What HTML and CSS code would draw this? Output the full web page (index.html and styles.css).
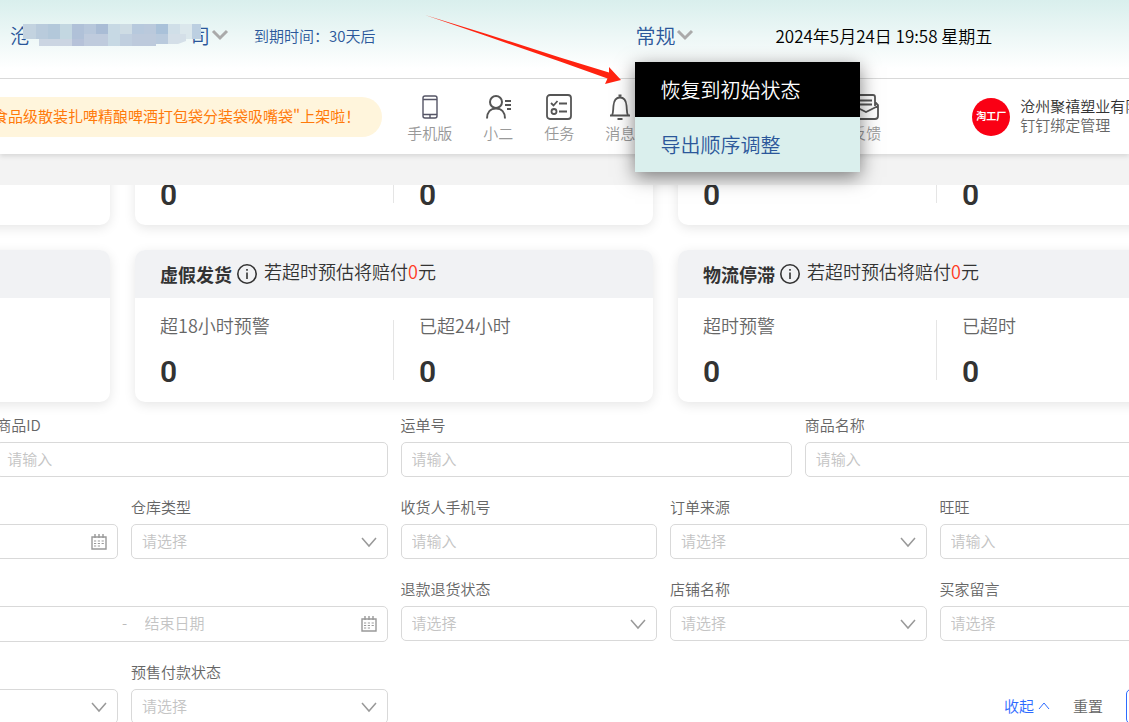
FILE: index.html
```html
<!DOCTYPE html>
<html lang="zh-CN">
<head>
    <meta charset="UTF-8">
    <meta name="viewport" content="width=device-width, initial-scale=1.0">
    <title>订单管理</title>
    <link rel="stylesheet" href="styles.css">
</head>
<body>

<!-- 图标 -->
<svg class="sprite" aria-hidden="true">
    <symbol id="icon-down" viewBox="0 0 16 16"><path d="M1 4l7 8 7-8" fill="none" stroke="#999" stroke-width="1.5"/></symbol>
    <symbol id="icon-bold-down" viewBox="0 0 16 12"><path d="M1 2l7 7 7-7" fill="none" stroke="#aaa" stroke-width="3"/></symbol>
    <symbol id="icon-info" viewBox="0 0 20 20">
        <circle cx="10" cy="10" r="9.2" fill="none" stroke="#333" stroke-width="1.6"/>
        <path d="M10 8.5v6.5M10 5v1.8" stroke="#333" stroke-width="1.6"/>
    </symbol>
    <symbol id="icon-calendar" viewBox="0 0 16 16">
        <path d="M1 3h14v12H1zM4 0v4M8 0v4M12 0v4" fill="none" stroke="#999" stroke-width="1.4"/>
        <path d="M3 7h10M3 9.5h10M3 12h7" stroke="#999" stroke-width="1.2" stroke-dasharray="2.2 1.6"/>
    </symbol>
</svg>

<div class="top">
    <!-- 页面头部 -->
    <header class="header">
        <button class="company" type="button">
            <span>沧</span>
            <svg class="mosaic" width="178" height="24" viewBox="0 0 178 24" aria-hidden="true">
                <path fill="#c3d3e0" d="M0 1h13v15H0z"/>
                <path fill="#b9cbdc" d="M13 1h12v15H13z"/>
                <path fill="#b3c8da" d="M25 1h12v15H25z"/>
                <path fill="#c3d7e1" d="M37 1h12v15H37z"/>
                <path fill="#b0c1d8" d="M49 1h12v15H49z"/>
                <path fill="#b7c7db" d="M61 1h12v15H61z"/>
                <path fill="#a9bcd5" d="M73 1h12v10H73z"/>
                <path fill="#c7d9e4" d="M85 1h12v22H85z"/>
                <path fill="#cedce4" d="M97 1h12v10H97z"/>
                <path fill="#b7c9dd" d="M109 1h12v10h-12z"/>
                <path fill="#bac9dc" d="M121 1h12v10h-12z"/>
                <path fill="#a9c1d9" d="M133 1h12v10h-12z"/>
                <path fill="#d0dfe8" d="M145 1h12v10h-12z"/>
                <path fill="#dbe7ec" d="M157 1h12v15h-12z"/>
                <path fill="#bccfe1" d="M169 1h9v15h-9z"/>
                <path fill="#cbd5e2" d="M16 16h33v7H16z"/>
                <path fill="#b6c2d9" d="M49 16h12v7H49z"/>
                <path fill="#bfcbdd" d="M61 11h24v12H61z"/>
                <path fill="#c0cfdf" d="M97 11h12v12H97z"/>
                <path fill="#bdcadc" d="M109 11h24v12h-24z"/>
                <path fill="#b9cadd" d="M133 11h12v10h-12z"/>
                <path fill="#d4dfe8" d="M145 11h18v7l-8 3h-10z"/>
            </svg>
            <span>司</span>
            <svg width="18" height="12" aria-hidden="true"><use href="#icon-bold-down"/></svg>
        </button>
        <span class="expire">到期时间：30天后</span>
        <div class="mode">
            <button class="mode-toggle" type="button">常规<svg width="18" height="12" aria-hidden="true"><use href="#icon-bold-down"/></svg></button>
            <div class="mode-menu">
                <button class="mode-item active" type="button">恢复到初始状态</button>
                <button class="mode-item" type="button">导出顺序调整</button>
            </div>
        </div>
        <time class="now" datetime="2024-05-24T19:58">2024年5月24日 19:58 星期五</time>
        <svg class="arrow" width="200" height="72" viewBox="0 0 200 72" aria-hidden="true">
            <path d="M0 0L60 18.500 135 42.500 184 57.500 184 52 196 65 180 69 182.500 63.500 135 46.500 60 20.500z" fill="#ff2310"/>
        </svg>
    </header>

    <!-- 工具栏 -->
    <nav class="toolbar">
        <a class="notice" href="#">食品级散装扎啤精酿啤酒打包袋分装袋吸嘴袋"上架啦！</a>
        <a class="tool" href="#">
            <svg width="26" height="26" viewBox="0 0 26 26" fill="none" stroke="#556" stroke-width="1.4">
                <rect x="6" y="2" width="14" height="22" rx="2"/>
                <path d="M6 5.5h14M6 20.5h14M13 20.5v3.500"/>
            </svg>
            手机版
        </a>
        <a class="tool" href="#">
            <svg width="26" height="26" viewBox="0 0 26 26" fill="none" stroke="#555" stroke-width="2">
                <circle cx="11" cy="8" r="6"/>
                <path d="M2 24.500c0-6 3.500-10 9-10s9 4 9 10M20 7h6M20 11h6M22 15h4"/>
            </svg>
            小二
        </a>
        <a class="tool" href="#">
            <svg width="26" height="26" viewBox="0 0 26 26" fill="none" stroke="#555" stroke-width="1.800">
                <rect x="1" y="1" width="24" height="24" rx="3"/>
                <path d="M5 9l2.500 2.500 4-4.500M13 9.500h8M13 17.500h8"/>
                <circle cx="8" cy="17.500" r="2.500"/>
            </svg>
            任务
        </a>
        <a class="tool" href="#">
            <svg width="26" height="26" viewBox="0 0 26 26" fill="none" stroke="#555" stroke-width="1.800">
                <path d="M3 21.500h20M5 21.500c1.500-3 1-6 1.500-10C7 6 9.500 3.500 13 3.500s6 2.500 6.500 8c.5 4 0 7 1.500 10M11.500 1.500h3M10.500 25h5"/>
            </svg>
            消息
        </a>
        <a class="tool tool-feedback" href="#">
            <svg width="26" height="26" viewBox="0 0 26 26" fill="none" stroke="#555" stroke-width="1.800">
                <path d="M4 12V3c0-1 1-2 2-2h14c1 0 2 1 2 2v9M7 6.500h12M7 10.500h12M22 8l3 3v11c0 2-1 3-3 3H4c-2 0-3-1-3-3V11l3-3M1 12l12 6 12-6"/>
            </svg>
            反馈
        </a>
        <span class="divider"></span>
        <div class="user">
            <span class="avatar">淘工厂</span>
            <div class="user-text">
                <div class="user-name">沧州聚禧塑业有限</div>
                <a class="user-link" href="#">钉钉绑定管理</a>
            </div>
        </div>
    </nav>
    <div class="band"></div>
</div>

<main class="content">
    <!-- 数据卡片 -->
    <section class="cards">
        <div class="card"></div>
        <div class="card">
            <div class="card-body card-body-full">
                <div class="stat"><strong>0</strong></div>
                <div class="stat"><strong>0</strong></div>
            </div>
        </div>
        <div class="card">
            <div class="card-body card-body-full">
                <div class="stat"><strong>0</strong></div>
                <div class="stat"><strong>0</strong></div>
            </div>
        </div>

        <div class="card"><div class="card-head"></div></div>
        <div class="card">
            <div class="card-head">
                <h3>虚假发货</h3>
                <svg width="20" height="20" aria-hidden="true"><use href="#icon-info"/></svg>
                <p>若超时预估将赔付<em>0</em>元</p>
            </div>
            <div class="card-body">
                <div class="stat"><span>超18小时预警</span><strong>0</strong></div>
                <div class="stat"><span>已超24小时</span><strong>0</strong></div>
            </div>
        </div>
        <div class="card">
            <div class="card-head">
                <h3>物流停滞</h3>
                <svg width="20" height="20" aria-hidden="true"><use href="#icon-info"/></svg>
                <p>若超时预估将赔付<em>0</em>元</p>
            </div>
            <div class="card-body">
                <div class="stat"><span>超时预警</span><strong>0</strong></div>
                <div class="stat"><span>已超时</span><strong>0</strong></div>
            </div>
        </div>
    </section>

    <!-- 筛选表单 -->
    <form class="filter">
        <div class="field span-3 from-4">
            <label for="goods-id">商品ID</label>
            <input class="control" id="goods-id" type="text" placeholder="请输入">
        </div>
        <div class="field span-3">
            <label for="waybill">运单号</label>
            <input class="control" id="waybill" type="text" placeholder="请输入">
        </div>
        <div class="field span-3">
            <label for="goods-name">商品名称</label>
            <input class="control" id="goods-name" type="text" placeholder="请输入">
        </div>

        <div class="field field-bare span-2 from-3">
            <div class="box">
                <input class="control" type="text" aria-label="日期">
                <svg width="16" height="16" aria-hidden="true"><use href="#icon-calendar"/></svg>
            </div>
        </div>
        <div class="field span-2">
            <label for="warehouse">仓库类型</label>
            <div class="box">
                <select class="control" id="warehouse"><option>请选择</option></select>
                <svg width="16" height="16" aria-hidden="true"><use href="#icon-down"/></svg>
            </div>
        </div>
        <div class="field span-2">
            <label for="phone">收货人手机号</label>
            <input class="control" id="phone" type="text" placeholder="请输入">
        </div>
        <div class="field span-2">
            <label for="source">订单来源</label>
            <div class="box">
                <select class="control" id="source"><option>请选择</option></select>
                <svg width="16" height="16" aria-hidden="true"><use href="#icon-down"/></svg>
            </div>
        </div>
        <div class="field span-2">
            <label for="wangwang">旺旺</label>
            <input class="control" id="wangwang" type="text" placeholder="请输入">
        </div>

        <div class="field field-bare span-4 from-3">
            <div class="box">
                <div class="control range">
                    <input type="text" aria-label="开始日期">
                    <span>-</span>
                    <input type="text" aria-label="结束日期" placeholder="结束日期">
                </div>
                <svg width="16" height="16" aria-hidden="true"><use href="#icon-calendar"/></svg>
            </div>
        </div>
        <div class="field span-2">
            <label for="refund">退款退货状态</label>
            <div class="box">
                <select class="control" id="refund"><option>请选择</option></select>
                <svg width="16" height="16" aria-hidden="true"><use href="#icon-down"/></svg>
            </div>
        </div>
        <div class="field span-2">
            <label for="shop">店铺名称</label>
            <div class="box">
                <select class="control" id="shop"><option>请选择</option></select>
                <svg width="16" height="16" aria-hidden="true"><use href="#icon-down"/></svg>
            </div>
        </div>
        <div class="field span-2">
            <label for="message">买家留言</label>
            <div class="box">
                <select class="control" id="message"><option>请选择</option></select>
                <svg width="16" height="16" aria-hidden="true"><use href="#icon-down"/></svg>
            </div>
        </div>

        <div class="field field-bare span-2 from-3">
            <div class="box">
                <select class="control" aria-label="状态"></select>
                <svg width="16" height="16" aria-hidden="true"><use href="#icon-down"/></svg>
            </div>
        </div>
        <div class="field span-2">
            <label for="presale">预售付款状态</label>
            <div class="box">
                <select class="control" id="presale"><option>请选择</option></select>
                <svg width="16" height="16" aria-hidden="true"><use href="#icon-down"/></svg>
            </div>
        </div>
        <div class="actions">
            <button class="link link-blue" type="button">收起<svg width="12" height="12" viewBox="0 0 12 12" aria-hidden="true"><path d="M1 9l5-6 5 6" fill="none" stroke="#2e6bff" stroke-width="1"/></svg></button>
            <button class="link" type="reset">重置</button>
            <button class="submit" type="submit" aria-label="查询"></button>
        </div>
    </form>
</main>

</body>
</html>
```
FILE: styles.css
```css
/* 全局样式 */
* {
    box-sizing: border-box;
}
body {
    margin: 0;
    height: 100vh;
    overflow: hidden;
    background: #fff;
    color: #333;
    font-family: "Noto Sans CJK SC", sans-serif;
    font-size: 15px;
    font-weight: 350;
    white-space: nowrap;
}
button, input, select {
    font: inherit;
    color: inherit;
}
button {
    padding: 0;
    border: 0;
    background: none;
    cursor: pointer;
}
a {
    color: inherit;
    text-decoration: none;
}
h3, p {
    margin: 0;
}
.sprite {
    display: none;
}

/* 页面头部 */
.top {
    position: relative;
    z-index: 10;
}
.header {
    position: relative;
    z-index: 2;
    display: flex;
    align-items: center;
    height: 79px;
    padding: 0 0 8px 10px;
    border-bottom: 1px solid #d9d9d9;
    background: linear-gradient(#d9efed, #fff 88%);
    color: #2b579a;
}
.company {
    display: flex;
    align-items: center;
    font-size: 20px;
}
.company svg:last-child,
.mode-toggle svg {
    margin-left: 1px;
}
.mosaic {
    z-index: 1;
    margin: 0 -11px 0 -7px;
}
.expire {
    margin-left: 25px;
}
.mode {
    position: relative;
    margin-left: 260px;
}
.mode-toggle {
    display: flex;
    align-items: center;
    font-size: 20px;
}
.mode-menu {
    position: absolute;
    top: 41px;
    left: 0;
    width: 225px;
    background: #daefed;
    box-shadow: 0 5px 18px rgba(0, 0, 0, 0.5);
}
.mode-item {
    display: block;
    width: 100%;
    height: 55px;
    padding-left: 25px;
    font-size: 20px;
    text-align: left;
}
.mode-item.active {
    background: #000;
    color: #fff;
}
.now {
    margin-left: 81px;
    color: #000;
    font-size: 17px;
}
.arrow {
    position: absolute;
    top: 15px;
    left: 425px;
}

/* 工具栏 */
.toolbar {
    position: relative;
    z-index: 1;
    display: flex;
    align-items: center;
    height: 75px;
    background: #fff;
    box-shadow: 0 2px 5px rgba(0, 0, 0, 0.12);
}
.notice {
    height: 40px;
    margin-left: -27px;
    padding: 0 22px 0 20px;
    border-radius: 20px;
    background: #fff5dc;
    color: #ff7a0a;
    font-weight: 400;
    line-height: 37px;
}
.tool {
    display: flex;
    flex-direction: column;
    align-items: center;
    margin-left: 31px;
    padding-top: 5px;
    color: #999;
    line-height: 25px;
}
.notice + .tool {
    margin-left: 25px;
}
.tool-feedback {
    margin-left: 216px;
}
.divider {
    width: 1px;
    height: 15px;
    margin: 0 50px 0 41px;
    background: #ddd;
}
.user {
    display: flex;
    align-items: center;
    gap: 10px;
}
.avatar {
    width: 38px;
    height: 38px;
    border-radius: 50%;
    background: #fa0014;
    color: #fff;
    font-size: 10px;
    font-weight: 700;
    line-height: 36px;
    text-align: center;
}
.user-text {
    padding-bottom: 3px;
    line-height: 19px;
}
.user-link {
    color: #666;
}
.band {
    height: 31px;
    background: #f3f3f3;
}

/* 内容区域，已向上滚动 */
.content {
    width: calc(100% + 475px);
    margin: -112px 0 0 -408px;
}

/* 数据卡片 */
.cards {
    display: grid;
    grid-template-columns: repeat(3, 1fr);
    gap: 25px;
}
.card {
    height: 152px;
    overflow: hidden;
    border-radius: 10px;
    background: #fff;
    box-shadow: 0 3px 12px rgba(0, 0, 0, 0.1);
}
.card-head {
    display: flex;
    align-items: center;
    height: 48px;
    padding: 0 25px;
    background: #f1f2f4;
    font-size: 18px;
}
.card-head h3 {
    font-size: 18px;
    font-weight: 700;
}
.card-head svg {
    margin: 0 7px 0 5px;
}
.card-head p {
    padding-bottom: 7px;
}
.card-head em {
    color: #ff3b1f;
    font-style: normal;
}
.card-body {
    display: grid;
    grid-template-columns: 1fr 1fr;
    align-items: center;
    height: 104px;
}
.card-body-full {
    margin-top: 48px;
}
.stat {
    display: flex;
    flex-direction: column;
    justify-content: flex-end;
    height: 60px;
    padding-left: 25px;
}
.stat:first-child {
    border-right: 1px solid #e5e5e5;
}
.stat span {
    color: #666;
    font-size: 18px;
    line-height: 24px;
}
.stat strong {
    margin: 17px 0 -10px;
    font-family: Roboto, sans-serif;
    font-size: 30px;
    font-weight: 600;
    line-height: 36px;
}

/* 筛选表单 */
.filter {
    display: grid;
    grid-template-columns: repeat(12, 1fr);
    gap: 20px 13px;
    align-items: start;
    margin-top: 12px;
    color: #666;
}
.field label {
    display: block;
    margin-bottom: 6px;
    line-height: 22px;
}
.filter {
    row-gap: 19px;
}
.field-bare {
    padding-top: 28px;
}
.span-2 {
    grid-column: span 2;
}
.span-3 {
    grid-column: span 3;
}
.from-3.span-2 {
    grid-column: 3 / span 2;
}
.from-3.span-4 {
    grid-column: 3 / span 4;
}
.from-4 {
    grid-column: 4 / span 3;
}
.control {
    display: block;
    width: 100%;
    height: 35px;
    padding: 0 10px 3px;
    border: 1px solid #d9d9d9;
    border-radius: 5px;
    outline: none;
    background: #fff;
}
select.control {
    appearance: none;
    color: #c4c4c4;
}
input::placeholder {
    color: #c4c4c4;
    opacity: 1;
}
.box {
    display: grid;
    align-items: center;
}
.box > * {
    grid-area: 1 / 1;
}
.box svg {
    justify-self: end;
    margin-right: 11px;
}
.range {
    display: flex;
    align-items: center;
    height: 36px;
}
.range input {
    flex: 1;
    min-width: 0;
    padding: 0;
    border: 0;
    outline: none;
    background: none;
}
.range span {
    width: 40px;
    color: #bbb;
    text-align: center;
}
.actions {
    display: flex;
    grid-column: 7 / -1;
    align-items: center;
    align-self: end;
    justify-content: flex-end;
    gap: 23px;
}
.link {
    padding-bottom: 3px;
}
.link-blue {
    color: #2e6bff;
}
.link svg {
    margin-left: 4px;
}
.submit {
    width: 70px;
    height: 35px;
    border: 1px solid #2e6bff;
    border-radius: 5px;
}
```
